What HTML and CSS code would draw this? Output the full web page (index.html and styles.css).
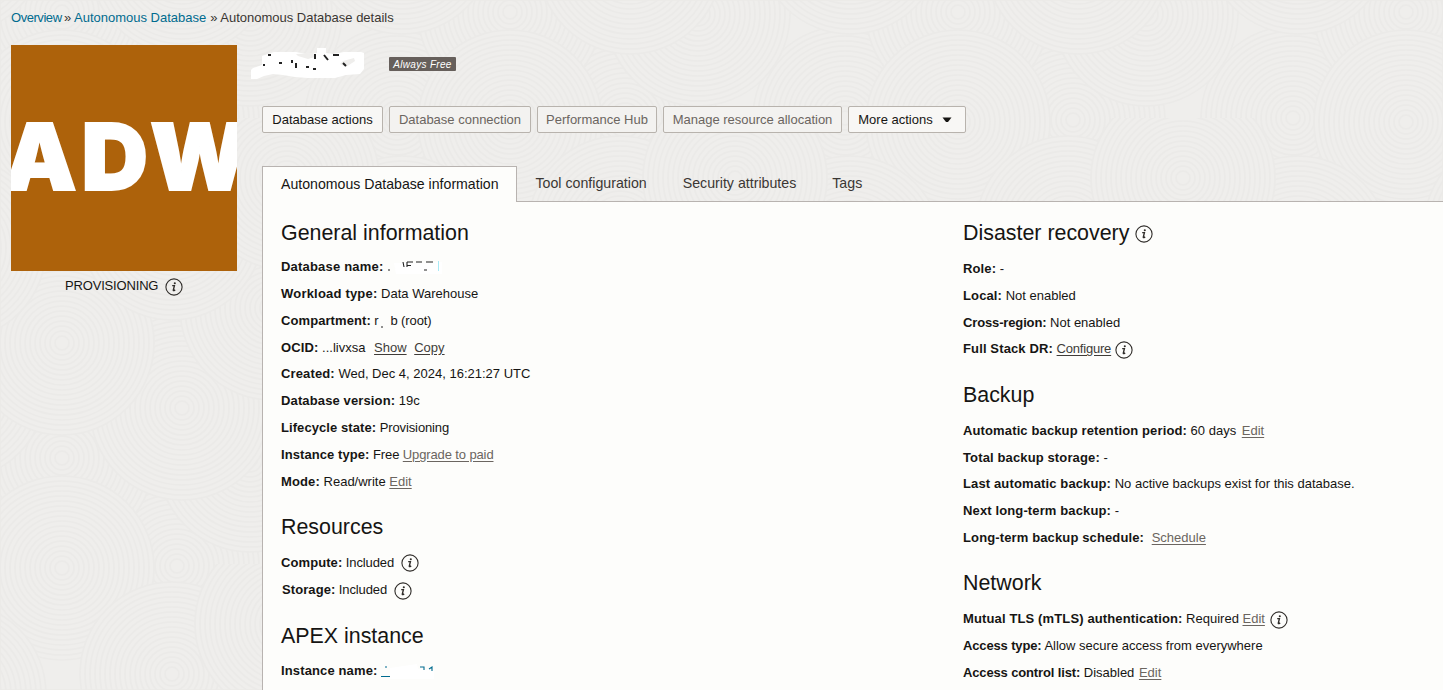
FILE: index.html
```html
<!DOCTYPE html>
<html lang="en">
<head>
<meta charset="utf-8">
<title>Autonomous Database details</title>
<link rel="stylesheet" href="styles.css">
</head>
<body>
<svg class="texture" width="1443" height="690" aria-hidden="true">
  <defs>
    <g id="rings">
      <circle r="92"/><circle r="87"/><circle r="82"/><circle r="77"/><circle r="72"/><circle r="67"/><circle r="62"/><circle r="57"/><circle r="52"/><circle r="47"/><circle r="42"/><circle r="37"/><circle r="32"/><circle r="27"/><circle r="22"/><circle r="17"/><circle r="12"/><circle r="7"/>
    </g>
    <pattern id="swirl" width="448" height="446" patternUnits="userSpaceOnUse" x="62" y="118">
      <g>
        <use href="#rings" x="115" y="448"/><use href="#rings" x="335" y="446"/><use href="#rings" x="115" y="2"/><use href="#rings" x="335" y="0"/>
        <use href="#rings" x="0" y="340"/><use href="#rings" x="448" y="340"/><use href="#rings" x="188" y="342"/>
        <use href="#rings" x="340" y="270"/><use href="#rings" x="120" y="290"/>
        <use href="#rings" x="0" y="450"/><use href="#rings" x="448" y="450"/><use href="#rings" x="0" y="4"/><use href="#rings" x="448" y="4"/>
        <use href="#rings" x="210" y="190"/><use href="#rings" x="0" y="225"/><use href="#rings" x="448" y="225"/>
        <use href="#rings" x="110" y="110"/><use href="#rings" x="340" y="130"/><use href="#rings" x="225" y="60"/>
      </g>
    </pattern>
    <symbol id="info" viewBox="0 0 18 18">
      <circle cx="9" cy="9" r="8.1" fill="none" stroke="#302d2a" stroke-width="1.1"/>
      <path d="M7.2 7.6h2.2L8.3 12.1q-.1.7.7.5l1.2-.6" fill="none" stroke="#302d2a" stroke-width="1.4"/>
      <circle cx="9.8" cy="5.2" r="1.05" fill="#302d2a"/>
    </symbol>
  </defs>
  <rect width="1443" height="690" fill="url(#swirl)"/>
</svg>

<nav class="crumbs"><a class="first">Overview</a><i>»</i><a>Autonomous Database</a><i class="second">»</i><span>Autonomous Database details</span></nav>

<div class="page">
  <aside class="side">
    <svg class="logo" width="226" height="226" viewBox="0 0 226 226">
      <rect width="226" height="226" fill="#ad620b"/>
      <text class="logo-text" y="145.3"><tspan x="-7.5">A</tspan><tspan x="70.5">D</tspan><tspan x="139">W</tspan></text>
    </svg>
    <div class="status">PROVISIONING <svg class="info"><use href="#info"/></svg></div>
  </aside>

  <main class="main">
    <header class="title">
      <svg class="scribble" width="116" height="34" viewBox="0 0 116 34">
        <path d="M1 22v9h6l7-3 9-2 10 1 12 2 13 1h27l11-3 14-1 4-5V5l-3-1H94l-11 2-7-1V0H67V5L56 6 46 4H24L12 8v9L3 20z" fill="#fff"/>
        <path d="M46 6l17-1 2 4-7 2-10-3zM93 13l11-3 1 3-9 6-6-3z" fill="#efeeec"/>
        <path d="M18 7h3M13 17h2M29 15h3M42 12v3M46 15v5M56 19h3M63 21h3M65 6v5M74 7l4 5M83 7h6M93 15l3 3" fill="none" stroke="#222" stroke-width="2"/>
      </svg>
      <span class="badge">Always Free</span>
    </header>
    <div class="actions">
      <button class="btn b1">Database actions</button><button class="btn b2 off">Database connection</button><button class="btn b3 off">Performance Hub</button><button class="btn b4 off">Manage resource allocation</button><button class="btn b5">More actions<svg width="10" height="6" viewBox="0 0 10 6"><path d="M.5.5h9L6 5H4z" fill="#161513"/></svg></button>
    </div>
    <div class="tabs"><span class="tab active">Autonomous Database information</span><span class="tab">Tool configuration</span><span class="tab">Security attributes</span><span class="tab">Tags</span></div>
    <section class="panel">
      <div class="col left">
        <h2 class="top">General information</h2>
        <div class="rows short">
          <p><b class="loose">Database name:</b><svg class="mask" width="58" height="16" viewBox="0 0 58 16"><path d="M6 4h24l24-1v12H8z" fill="#fff"/><path d="M0 11h2M15 3l1 5M19 3h6M19 3v5M19 6.5h4M28 3h6M38 3h7" fill="none" stroke="#222" stroke-width="1.1"/><path d="M36 11h3" stroke="#222"/><path d="M50.5 2v10" stroke="#a9eaf5"/></svg></p>
          <p><b class="loose">Workload type:</b> Data Warehouse</p>
          <p class="snug"><b>Compartment:</b> r<svg class="gap" width="12" height="16"><path d="M2 14h2" stroke="#222"/></svg>b (root)</p>
          <p><b>OCID:</b> ...livxsa <a class="dark g5">Show</a> <a class="dark g4">Copy</a></p>
          <p><b>Created:</b> Wed, Dec 4, 2024, 16:21:27 UTC</p>
          <p><b>Database version:</b> 19c</p>
          <p class="snug"><b>Lifecycle state:</b> Provisioning</p>
          <p class="snug"><b>Instance type:</b> Free <a>Upgrade to paid</a></p>
          <p><b>Mode:</b> Read/write <a>Edit</a></p>
        </div>
        <h2>Resources</h2>
        <div class="rows res">
          <p class="snug"><b>Compute:</b> Included <svg class="info g3"><use href="#info"/></svg></p>
          <p class="inset snug"><b>Storage:</b> Included <svg class="info low g3"><use href="#info"/></svg></p>
        </div>
        <h2 class="apex">APEX instance</h2>
        <div class="rows">
          <p><b>Instance name:</b><svg class="mask" width="60" height="18" viewBox="0 0 60 18"><path d="M9 7l27-4 1 5 16 1v9H9z" fill="#fff"/><path d="M0 15.5h9M4 6h2M39 6h4v3M48 8l3-2v4" fill="none" stroke="#006b8f" stroke-width="1.1"/></svg></p>
        </div>
      </div>
      <div class="col right">
        <h2>Disaster recovery<svg class="info hi"><use href="#info"/></svg></h2>
        <div class="rows dr">
          <p><b>Role:</b> -</p>
          <p><b>Local:</b> Not enabled</p>
          <p><b class="tight">Cross-region:</b> Not enabled</p>
          <p><b>Full Stack DR:</b> <a class="dark narrow">Configure</a> <svg class="info low"><use href="#info"/></svg></p>
        </div>
        <h2>Backup</h2>
        <div class="rows bk">
          <p><b>Automatic backup retention period:</b> 60 days <a class="g2">Edit</a></p>
          <p><b>Total backup storage:</b> -</p>
          <p><b>Last automatic backup:</b> No active backups exist for this database.</p>
          <p><b>Next long-term backup:</b> -</p>
          <p><b>Long-term backup schedule:</b> <a class="g4">Schedule</a></p>
        </div>
        <h2>Network</h2>
        <div class="rows net">
          <p><b>Mutual TLS (mTLS) authentication:</b> Required <a>Edit</a> <svg class="info low g1"><use href="#info"/></svg></p>
          <p><b class="tight">Access type:</b> Allow secure access from everywhere</p>
          <p><b class="tight">Access control list:</b> Disabled <a class="g1">Edit</a></p>
        </div>
      </div>
    </section>
  </main>
</div>
</body>
</html>
```
FILE: styles.css
```css
* { box-sizing: border-box; }
body {
  margin: 0;
  width: 1443px;
  height: 690px;
  overflow: hidden;
  background: #efeeec;
  color: #161513;
  font: 13px/20px "Liberation Sans", Arial, sans-serif;
  display: flex;
  flex-direction: column;
}
.texture { position: absolute; left: 0; top: 0; z-index: -1; fill: #efeeec; stroke: #ebeae8; stroke-width: 1.6; }
.crumbs { flex: none; height: 45px; padding: 8px 11px 0; display: flex; color: #3a3632; }
.crumbs a { color: #006b8f; }
.crumbs .first { letter-spacing: -.45px; width: 50px; }
.crumbs i { font-style: normal; width: 13px; padding-left: 3px; }
.crumbs .second { width: 14px; padding-left: 4px; }
.page { display: flex; flex: 1; min-height: 0; padding-left: 11px; }
.side { width: 226px; flex: none; }
.logo { display: block; }
.logo-text { font: 900 92px Inter, sans-serif; fill: #fff; stroke: #fff; stroke-width: 2px; }
.status { display: flex; padding: 5px 0 0 54px; height: 30px; gap: 7px; letter-spacing: -.17px; }
.status .info { margin-top: 2px; }
.main { flex: 1; margin-left: 25px; display: flex; flex-direction: column; }
.title { flex: none; height: 61px; display: flex; position: relative; padding: 12px 0 0 127px; }
.scribble { position: absolute; left: -12px; top: 3px; overflow: visible; }
.badge { height: 14px; width: 67px; background: #665f5b; color: #fff; border-radius: 1px; font-size: 10px; line-height: 15px; font-style: italic; text-align: center; letter-spacing: .3px; }
.actions { flex: none; display: flex; gap: 6px; height: 60px; }
.btn { height: 27px; padding: 0; border: 1px solid #b8b3ad; border-radius: 2px; background: #f8f7f5; color: #161513; font: 13px/20px "Liberation Sans", Arial, sans-serif; white-space: nowrap; }
.off { background: #f3f2f0; color: #6b6560; }
.b1 { width: 121px; } .b2 { width: 142px; } .b3 { width: 120px; } .b4 { width: 179px; } .b5 { width: 118px; }
.b5 svg { margin: 0 4px 1px 9px; }
.tabs { flex: none; display: flex; height: 36px; align-items: center; border-bottom: 1px solid #b8b3b0; font-size: 14.2px; color: #3b3734; }
.tab { padding: 0 18px 2px; }
.tab:nth-child(2) { padding-left: 18.5px; }
.active { width: 255px; height: 36px; line-height: 35px; background: #fdfdfb; border: 1px solid #b8b3b0; border-bottom: 0; padding: 0 0 0 18px; font-size: 14.13px; color: #161513; margin-bottom: -1px; }
.panel { flex: 1; display: flex; background: #fdfdfb; border-left: 1px solid #b8b3b0; padding: 18px 0 0 18px; }
.left { width: 682px; }
.col { white-space: nowrap; }
h2 { margin: 0; font-size: 21.4px; line-height: 26px; font-weight: 400; height: 37px; display: flex; }
h2.top { height: 35px; }
h2.apex { height: 36px; }
.hi { margin: 5px 0 0 6px; }
.rows { margin-bottom: 18px; }
.short { margin-bottom: 17px; }
.rows p { margin: 0; height: 26.85px; line-height: 24px; }
.res { margin-bottom: 18.7px; }
.rows.res p { height: 27px; }
.rows.dr p { height: 26.85px; }
.rows.dr p:nth-child(3) { height: 26.3px; }
.rows.bk { margin-bottom: 17.6px; }
.rows.bk p { height: 26.75px; }
.rows.net p { height: 27px; }
.bk + h2 { height: 36.5px; }
b { letter-spacing: .13px; }
b.loose { letter-spacing: .2px; }
b.tight { letter-spacing: -.14px; }
a { text-decoration: none; }
.rows a { color: #6b6560; text-decoration: underline; text-underline-offset: 2px; }
.rows a.dark { color: #403c38; }
.narrow { letter-spacing: -.2px; }
.snug { letter-spacing: -.12px; }
.snug b { letter-spacing: .08px; }
.info { width: 18px; height: 18px; flex: none; overflow: visible; vertical-align: -5px; }
.info.low { vertical-align: -6px; }
.g5 { margin-left: 5px; } .g4 { margin-left: 4px; } .g3 { margin-left: 3px; } .g2 { margin-left: 2px; } .g1 { margin-left: 1px; }
.mask { margin-left: 4px; vertical-align: -4px; }
.gap { vertical-align: -4px; }
.inset { padding-left: 1px; }
```
